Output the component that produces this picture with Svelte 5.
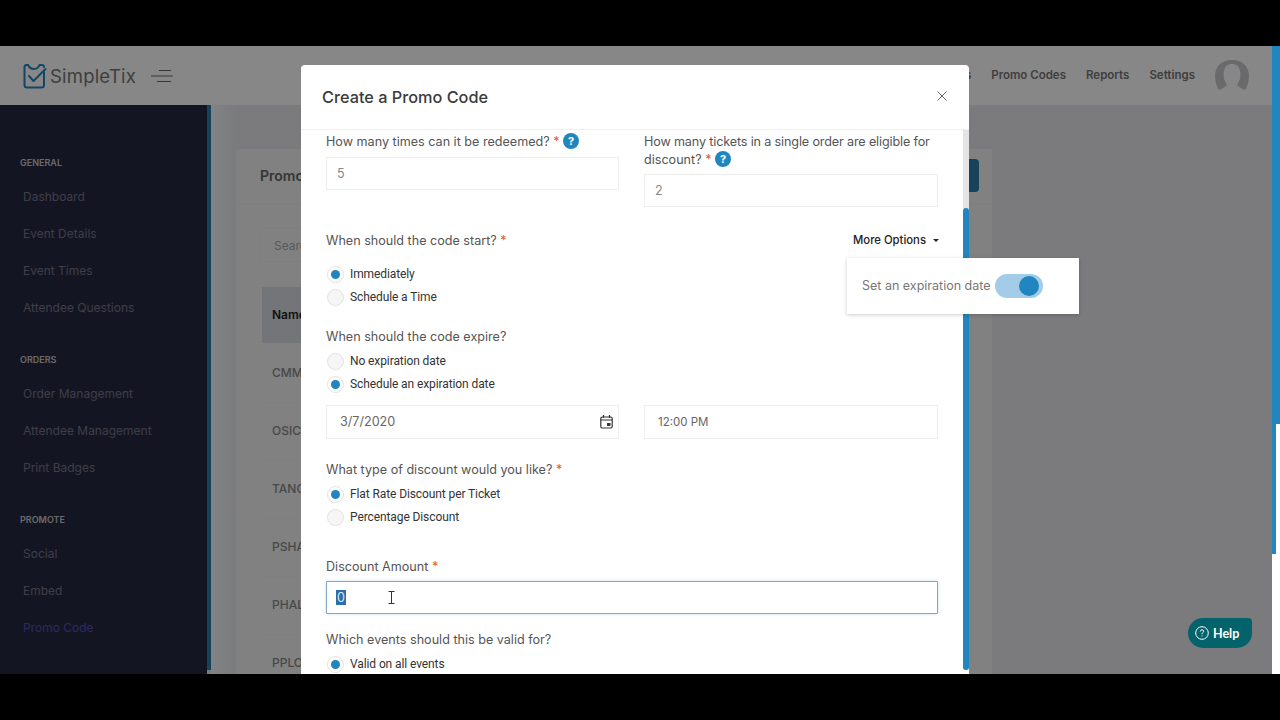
<script>
  const navGroups = [
    { title: "General", items: ["Dashboard", "Event Details", "Event Times", "Attendee Questions"] },
    { title: "Orders", items: ["Order Management", "Attendee Management", "Print Badges"] },
    { title: "Promote", items: ["Social", "Embed", "Promo Code"] }
  ];
  const topLinks = ["Events", "Promo Codes", "Reports", "Settings"];
  const rows = ["CMM", "OSIC", "TANG", "PSHA", "PHAL", "PPLO"];
</script>

<div class="screen">
  <div class="page">
    <header class="topbar">
      <svg class="logo" width="24" height="26" viewBox="0 0 24 26" fill="none" stroke="#2185bf" stroke-width="2" stroke-linecap="round" stroke-linejoin="round">
        <path d="M5 2 H3.5 Q1.5 2 1.5 4 V22 Q1.5 24.500 4 24.500 H18.500 Q21 24.500 21 22 V9" />
        <path d="M5 2 Q7 6 11 6 Q15 6 16.500 2 H18.500 Q21 2 21 4" />
        <path d="M6 13 L10.500 18 L22.500 6" />
      </svg>
      <span class="brand">SimpleTix</span>
      <svg class="burger" width="22" height="14" viewBox="0 0 22 14" stroke="#666" stroke-width="1">
        <path d="M8 1.500 H20 M0 7 H22 M6 12.500 H20" />
      </svg>
      <nav class="toplinks">
        {#each topLinks as link}
          <span>{link}</span>
        {/each}
        <svg class="avatar" width="34" height="32" viewBox="0 0 34 32">
          <path fill="#c8c9cd" d="M17 0 C27 0 34 6 34 16 C34 22 32 27 30 30 C27 29 24 27 22 25 C25 21 26 16 25 11 C24 6 21 4 17 4 C13 4 10 6 9 11 C8 16 9 21 12 25 C10 27 7 29 4 30 C2 27 0 22 0 16 C0 6 7 0 17 0 Z" />
        </svg>
      </nav>
    </header>

    <div class="below">
      <aside class="sidebar">
        {#each navGroups as group}
          <section class="group">
            <h4>{group.title}</h4>
            {#each group.items as item}
              <a class="item" class:active={item === "Promo Code"} href="#top">{item}</a>
            {/each}
          </section>
        {/each}
      </aside>
      <div class="stripe"></div>

      <main class="content">
        <div class="card">
          <div class="card-head">
            <span class="card-title">Promo Codes</span>
            <span class="add-btn"></span>
          </div>
          <div class="card-body">
            <div class="search">Search</div>
            <div class="table-head">Name</div>
            {#each rows as row}
              <div class="table-row">{row}</div>
            {/each}
          </div>
        </div>
      </main>
    </div>

    <div class="scrim"></div>

    <div class="modal">
      <div class="modal-head">
        <h2>Create a Promo Code</h2>
        <svg width="10" height="10" viewBox="0 0 10 10" stroke="#666" stroke-width="1">
          <path d="M0.500 0.500 L9.500 9.500 M9.500 0.500 L0.500 9.500" />
        </svg>
      </div>

      <div class="modal-body">
        <div class="form">
          <div class="two-col">
            <div>
              <div class="label">How many times can it be redeemed? <i>*</i> <span class="hint">?</span></div>
              <input class="field muted" value="5" readonly />
            </div>
            <div>
              <div class="label tight">How many tickets in a single order are eligible for</div>
              <div class="label">discount? <i>*</i> <span class="hint">?</span></div>
              <input class="field muted" value="2" readonly />
            </div>
          </div>

          <div class="start-row">
            <div class="label">When should the code start? <i>*</i></div>
            <button class="more">More Options <span class="caret"></span></button>
          </div>
          <div class="radios first">
            <label class="radio on">Immediately</label>
            <label class="radio">Schedule a Time</label>
          </div>

          <div class="label expire">When should the code expire?</div>
          <div class="radios">
            <label class="radio">No expiration date</label>
            <label class="radio on">Schedule an expiration date</label>
          </div>

          <div class="two-col when">
            <div class="field date">
              <span>3/7/2020</span>
              <svg width="13" height="14" viewBox="0 0 13 14" fill="none" stroke="#333" stroke-width="1.200">
                <rect x="0.800" y="2" width="11.400" height="11" rx="1.500" />
                <path d="M3.500 0 V3 M9.500 0 V3 M0.800 5 H12.200" />
                <rect x="7" y="8" width="3.500" height="3" fill="#333" stroke="none" />
              </svg>
            </div>
            <input class="field time" value="12:00 PM" readonly />
          </div>

          <div class="label type">What type of discount would you like? <i>*</i></div>
          <div class="radios">
            <label class="radio on">Flat Rate Discount per Ticket</label>
            <label class="radio">Percentage Discount</label>
          </div>

          <div class="label amount">Discount Amount <i>*</i></div>
          <div class="field focused"><span class="selected">0</span></div>

          <div class="label valid">Which events should this be valid for?</div>
          <div class="radios">
            <label class="radio on">Valid on all events</label>
          </div>
        </div>

        <div class="scrollbar"><div class="thumb"></div></div>
      </div>
    </div>

    <div class="popover">
      <span>Set an expiration date</span>
      <span class="switch"><span class="knob"></span></span>
    </div>

    <svg class="ibeam" width="7" height="13" viewBox="0 0 7 13" fill="none" stroke="#333" stroke-width="1">
      <path d="M0.500 0.500 H6.500 M3.500 0.500 V12.500 M0.500 12.500 H6.500" />
    </svg>

    <button class="help">
      <svg width="14" height="14" viewBox="0 0 14 14" fill="none" stroke="#fff" stroke-width="1">
        <circle cx="7" cy="7" r="6.300" />
        <path d="M5.300 5.500 Q5.300 3.800 7 3.800 Q8.700 3.800 8.700 5.300 Q8.700 6.200 7.600 6.800 Q7 7.200 7 8.200 M7 9.400 V10.400" />
      </svg>
      Help
    </button>

    <div class="page-scroll"></div>
    <div class="page-scroll-inner"></div>
  </div>
</div>

<style>
  :global(body) {
    margin: 0;
    background: #000;
  }

  .screen {
    width: 1280px;
    height: 720px;
    padding-top: 46px;
    box-sizing: border-box;
    background: #000;
    overflow: hidden;
    font-family: Inter, "Liberation Sans", sans-serif;
  }

  .page {
    position: relative;
    height: 628px;
    overflow: hidden;
    background: #e8e9ee;
  }

  /* Page behind the dialog */
  .topbar {
    display: flex;
    align-items: center;
    height: 59px;
    padding-left: 23px;
    padding-right: 31px;
    background: #fff;
  }

  .logo {
    margin-right: 3px;
  }

  .brand {
    width: 101px;
    font-size: 18.500px;
    letter-spacing: 0.2px;
    color: #777;
  }

  .toplinks {
    display: flex;
    align-items: center;
    gap: 20px;
    margin-left: auto;
    margin-top: -1px;
    font-size: 11.500px;
    font-weight: 600;
    color: #777;
  }

  .avatar {
    margin-top: 1px;
  }

  .below {
    display: flex;
    height: 569px;
  }

  .sidebar {
    flex: 0 0 207px;
    padding-top: 51px;
    box-sizing: border-box;
    background: #272940;
  }

  .stripe {
    flex: 0 0 4px;
    height: 565px;
    background: #2a7dac;
  }

  .group {
    margin-bottom: 27px;
  }

  .group h4 {
    margin: 0 0 8px 20px;
    height: 14px;
    line-height: 14px;
    font-size: 9px;
    font-weight: 600;
    text-transform: uppercase;
    color: #c8c8cc;
  }

  .item {
    display: block;
    height: 37px;
    line-height: 37px;
    margin-left: 23px;
    font-size: 12px;
    color: #75768a;
    text-decoration: none;
  }

  .item.active {
    color: #4f50b8;
  }

  .content {
    flex: 1;
    padding: 44px 0 0 25px;
    background: linear-gradient(to right, #f6f7fa 0, #e8e9ee 25px);
  }

  .card {
    width: 756px;
    height: 540px;
    background: #f4f4f4;
  }

  .card-head {
    display: flex;
    align-items: center;
    justify-content: space-between;
    height: 56px;
    padding: 0 13px 0 24px;
    box-sizing: border-box;
    border-bottom: 1px solid #eee;
  }

  .card-title {
    font-size: 14px;
    font-weight: 600;
    color: #666;
    margin-bottom: 3px;
  }

  .add-btn {
    width: 100px;
    height: 33px;
    border-radius: 4px;
    background: #2a7dac;
    margin-bottom: 2px;
  }

  .card-body {
    padding: 23px 40px 0 24px;
  }

  .search {
    width: 200px;
    height: 34px;
    line-height: 34px;
    padding-left: 13px;
    box-sizing: border-box;
    border: 1px solid #eee;
    font-size: 12px;
    color: #aaa;
  }

  .table-head {
    margin: 25px 0 2px 2px;
    height: 56px;
    line-height: 56px;
    padding-left: 10px;
    background: #dcdde2;
    font-size: 12px;
    font-weight: 600;
    color: #222;
  }

  .table-row {
    height: 58px;
    line-height: 56px;
    padding-left: 12px;
    box-sizing: border-box;
    font-size: 12px;
    font-weight: 500;
    color: #888;
    border-bottom: 1px solid #f0f0f0;
  }

  .scrim {
    position: absolute;
    inset: 0;
    background: rgba(0, 0, 0, 0.47);
  }

  /* Dialog */
  .modal {
    position: absolute;
    top: 19px;
    left: 301px;
    width: 668px;
    height: 640px;
    display: flex;
    flex-direction: column;
    background: #fff;
    border-radius: 4px 4px 0 0;
  }

  .modal-head {
    flex: 0 0 65px;
    display: flex;
    align-items: center;
    justify-content: space-between;
    padding: 0 22px 2px 21px;
    box-sizing: border-box;
    border-bottom: 1px solid #f0f0f0;
  }

  .modal-head h2 {
    margin: 2px 0 0;
    font-size: 16.300px;
    font-weight: 500;
    color: #3b3b3b;
  }

  .modal-body {
    flex: 1;
    display: flex;
    min-height: 0;
    overflow: hidden;
  }

  .form {
    flex: 0 0 612px;
    padding: 3px 0 0 25px;
  }

  .scrollbar {
    margin-left: 25px;
    width: 6px;
    height: 540px;
    padding-top: 78px;
    box-sizing: border-box;
    background: #e4e4e4;
  }

  .thumb {
    height: 462px;
    border-radius: 3px;
    background: #2185bf;
  }

  .two-col {
    display: grid;
    grid-template-columns: 293px 294px;
    gap: 25px;
  }

  .label {
    font-size: 12.600px;
    line-height: 18px;
    color: #555;
  }

  .tight {
    letter-spacing: -0.140px;
    white-space: nowrap;
  }

  .label i {
    font-style: normal;
    color: #e4572e;
  }

  .hint {
    display: inline-block;
    width: 16px;
    height: 16px;
    border-radius: 50%;
    background: #2185bf;
    color: #fff;
    font-size: 11px;
    font-weight: 700;
    line-height: 16px;
    text-align: center;
    vertical-align: 1px;
  }

  .field {
    display: block;
    width: 100%;
    height: 33px;
    margin-top: 6px;
    padding: 0 10px;
    box-sizing: border-box;
    border: 1px solid #eeeeee;
    background: #fff;
    font-family: Inter, "Liberation Sans", sans-serif;
    font-size: 12.600px;
    color: #666;
    outline: none;
  }

  .muted {
    color: #888;
  }

  .two-col > div:nth-child(2) .field {
    margin-top: 5px;
  }

  .start-row {
    display: flex;
    justify-content: space-between;
    align-items: center;
    margin-top: 25px;
  }

  .more {
    display: flex;
    align-items: center;
    gap: 7px;
    padding: 0 0 2px 2px;
    margin-right: -1px;
    border: none;
    background: none;
    font-family: Inter, "Liberation Sans", sans-serif;
    font-size: 11.300px;
    font-weight: 500;
    color: #222;
  }

  .caret {
    border-left: 3px solid transparent;
    border-right: 3px solid transparent;
    border-top: 3px solid #222;
  }

  .radios {
    margin-top: 3px;
  }

  .radios.first {
    margin-top: 12px;
  }

  .radio {
    display: block;
    position: relative;
    height: 23px;
    line-height: 25px;
    padding-left: 24px;
    font-family: Roboto, "Liberation Sans", sans-serif;
    font-size: 12px;
    font-weight: 400;
    letter-spacing: -0.100px;
    color: #333;
  }

  .radio::before {
    content: "";
    position: absolute;
    left: 1px;
    top: 4px;
    width: 15px;
    height: 15px;
    border-radius: 50%;
    border: 1px solid #e2e2e2;
    background: #f6f6f6;
  }

  .radio.on::before {
    background: #fff;
  }

  .radio.on::after {
    content: "";
    position: absolute;
    left: 5px;
    top: 8px;
    width: 9px;
    height: 9px;
    border-radius: 50%;
    background: #2185bf;
  }

  .expire {
    margin-top: 20px;
  }

  .when {
    margin-top: 3.500px;
  }

  .date {
    display: flex;
    align-items: center;
    justify-content: space-between;
    height: 34px;
    padding: 0 5px 0 13px;
  }

  .time {
    height: 34px;
    padding-left: 13px;
    font-size: 11.500px;
  }

  .type {
    margin-top: 22.500px;
  }

  .amount {
    margin-top: 30px;
  }

  .focused {
    width: 612px;
    margin-top: 5px;
    line-height: 31px;
    padding-left: 9px;
    border-color: #80a9c4;
    border-radius: 1px;
    box-shadow: 0 0 3px rgba(33, 133, 191, 0.25);
  }

  .selected {
    display: inline-block;
    line-height: 15px;
    padding: 0 1px;
    background: #2d6ea6;
    color: #dbe8f2;
  }

  .valid {
    margin-top: 17px;
  }

  /* Things on top of the dialog */
  .popover {
    position: absolute;
    top: 212px;
    left: 847px;
    display: flex;
    align-items: center;
    gap: 4px;
    width: 232px;
    height: 56px;
    padding: 0 0 1px 15px;
    box-sizing: border-box;
    background: #fff;
    box-shadow: 0 1px 4px rgba(0, 0, 0, 0.2);
    font-size: 12.500px;
    color: #777;
  }

  .switch {
    display: flex;
    align-items: center;
    justify-content: flex-end;
    width: 48px;
    height: 24px;
    padding-right: 4px;
    box-sizing: border-box;
    border-radius: 12px;
    background: #a3cce8;
  }

  .knob {
    width: 20px;
    height: 20px;
    border-radius: 50%;
    background: #2185bf;
  }

  .ibeam {
    position: absolute;
    top: 545px;
    left: 388px;
  }

  .help {
    position: absolute;
    top: 572px;
    left: 1188px;
    display: flex;
    align-items: center;
    gap: 4px;
    width: 64px;
    height: 30px;
    padding: 0 0 0 7px;
    box-sizing: border-box;
    border: none;
    border-radius: 15px 4px 15px 15px;
    background: #03626a;
    font-family: Lato, "Liberation Sans", sans-serif;
    font-size: 12.500px;
    font-weight: 700;
    color: #fff;
  }

  .page-scroll {
    position: absolute;
    top: 0;
    right: 0;
    width: 8px;
    height: 100%;
    background: #fff;
  }

  .page-scroll::before {
    content: "";
    position: absolute;
    top: 0;
    left: 0;
    width: 4px;
    height: 508px;
    background: #2185bf;
  }

  .page-scroll-inner {
    position: absolute;
    top: 0;
    right: 0;
    width: 4px;
    height: 378px;
    background: #2185bf;
  }
</style>
